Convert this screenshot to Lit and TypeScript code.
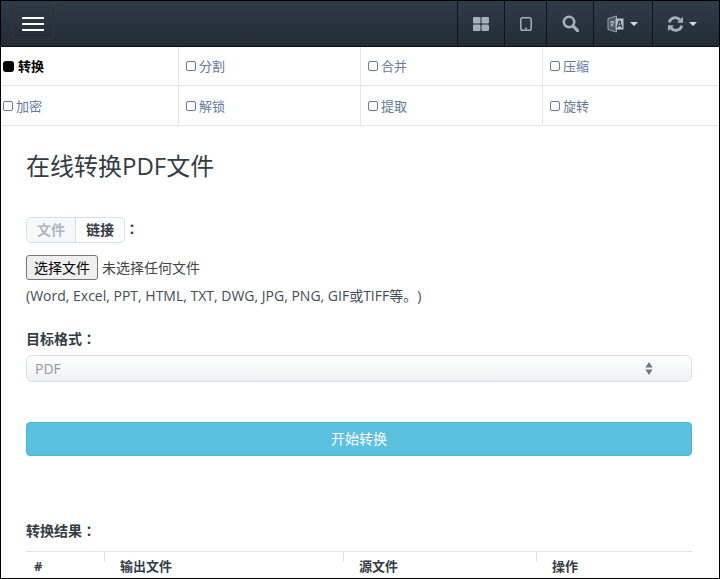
import { LitElement, html, css } from "lit";
import { customElement } from "lit/decorators.js";

const row1 = ["转换", "分割", "合并", "压缩"];
const row2 = ["加密", "解锁", "提取", "旋转"];

@customElement("app-root")
export class AppRoot extends LitElement {
  static styles = css`
    :host {
      display: block;
      width: 720px;
      height: 579px;
      box-sizing: border-box;
      border: 1px solid #000;
      overflow: hidden;
      background: #fff;
      font-family: "Open Sans", "Noto Sans CJK JP", sans-serif;
      font-size: 14px;
      line-height: 20px;
      color: #34495e;
      text-spacing-trim: space-all;
    }
    .nav {
      display: flex;
      background: linear-gradient(#2f3b47, #232c35);
      border-bottom: 1px solid #0b0f13;
      height: 45px;
    }
    .toggle {
      width: 42px;
      height: 33px;
      box-sizing: border-box;
      margin: 6px 0 0 11px;
      border: 1px solid #333;
      border-radius: 4px;
      display: flex;
      flex-direction: column;
      align-items: center;
      justify-content: center;
      gap: 4px;
    }
    .toggle i {
      display: block;
      width: 22px;
      height: 2px;
      background: #fff;
    }
    .spacer { flex: 1; }
    .ni {
      border-left: 1px solid #0f1419;
      display: flex;
      align-items: center;
      justify-content: center;
      gap: 6px;
      box-sizing: border-box;
      color: #a4afba;
    }
    .ni svg { display: block; }
    .ni.lang { padding-right: 2px; }
    .ni.sync { padding-right: 9px; gap: 5px; }
    .caret {
      width: 0;
      height: 0;
      border-left: 4px solid transparent;
      border-right: 4px solid transparent;
      border-top: 4px solid #d4d9de;
    }
    .tools {
      display: grid;
      grid-template-columns: 178px 182px 182px 1fr;
    }
    .cell {
      height: 39px;
      box-sizing: border-box;
      border-bottom: 1px solid #e7e7e7;
      border-right: 1px solid #e7e7e7;
      display: flex;
      align-items: center;
      padding-left: 7px;
      font-size: 13px;
      color: #66799c;
    }
    .cell:nth-child(4n) { border-right: 0; }
    .cell.first { padding-left: 2px; }
    .cell.r2 { height: 40px; }
    .cell.on { color: #000; font-weight: 700; }
    .box {
      width: 10px;
      height: 10px;
      box-sizing: border-box;
      border: 1px solid #66799c;
      border-radius: 2px;
      flex: none;
      margin-right: 3px;
    }
    .on .box {
      width: 11px;
      height: 11px;
      border: 0;
      background: #000;
      border-radius: 3px;
      margin-right: 4px;
    }
    .main { padding: 0 27px 0 25px; }
    h1 {
      margin: 24px 0 0;
      font-size: 24px;
      line-height: 32px;
      font-weight: 400;
      color: #333c45;
    }
    .tabs {
      display: flex;
      align-items: center;
      margin-top: 35px;
      font-weight: 700;
      font-size: 14px;
      color: #333c45;
    }
    .seg {
      display: flex;
      border: 1px solid #d5dfe9;
      border-radius: 5px;
      height: 26px;
      box-sizing: border-box;
    }
    .seg span {
      display: flex;
      align-items: center;
      justify-content: center;
      height: 23px;
    }
    .seg .act {
      width: 49px;
      height: 24px;
      padding-bottom: 1px;
      box-sizing: border-box;
      background: #f7f8fa;
      color: #aeb6c0;
      border-right: 1px solid #d5dfe9;
      border-radius: 4px 0 0 4px;
    }
    .seg .oth { width: 48px; }
    .colon { margin-top: -2px; }
    .file {
      display: flex;
      align-items: center;
      margin-top: 12px;
      font-size: 14px;
      color: #444;
    }
    button.pick {
      width: 72px;
      height: 25px;
      padding: 0 0 2px;
      margin-right: 4px;
      background: #efefef;
      border: 1px solid #767676;
      border-radius: 3px;
      font: 14px "Noto Sans CJK JP", sans-serif;
      color: #000;
    }
    .hint { margin-top: 6px; font-size: 14px; color: #444c55; }
    .lbl {
      font-weight: 700;
      font-size: 14px;
      color: #333c45;
    }
    .lbl.fmt { margin-top: 23px; }
    .sel {
      margin-top: 6px;
      height: 27px;
      box-sizing: border-box;
      border: 1px solid #d9dfe6;
      border-radius: 6px;
      background: linear-gradient(#fff, #f0f1f2);
      display: flex;
      align-items: center;
      justify-content: space-between;
      padding: 0 38px 0 8px;
      font-size: 14px;
      color: #8f979f;
    }
    .go {
      display: block;
      width: 100%;
      height: 34px;
      margin-top: 40px;
      padding: 0 0 2px;
      background: #5bc0de;
      border: 1px solid #46b8da;
      border-radius: 4px;
      color: #fff;
      font: 14px "Open Sans", "Noto Sans CJK JP", sans-serif;
    }
    .lbl.res { margin-top: 65px; }
    .thead {
      margin-top: 10px;
      display: grid;
      grid-template-columns: 78px 239px 193px 1fr;
      border-top: 1px solid #dee2e6;
      font-weight: 700;
      font-size: 13px;
      color: #333c45;
    }
    .th { position: relative; padding: 4px 0 0 8px; }
    .th + .th { padding-left: 16px; }
    .th + .th::before {
      content: "";
      position: absolute;
      left: 0;
      top: 0;
      height: 10px;
      width: 1px;
      background: #dee2e6;
    }
  `;

  private cell(t: string, cls: string) {
    return html`<div class="cell ${cls}"><span class="box"></span>${t}</div>`;
  }

  render() {
    return html`
      <div class="nav">
        <div class="toggle"><i></i><i></i><i></i></div>
        <div class="spacer"></div>
        <div class="ni" style="width:47px">
          <svg width="16" height="14" viewBox="0 0 16 14" fill="currentColor">
            <rect x="0" y="0" width="7.5" height="6.5" rx="1.2" />
            <rect x="8.5" y="0" width="7.5" height="6.5" rx="1.2" />
            <rect x="0" y="7.5" width="7.5" height="6.5" rx="1.2" />
            <rect x="8.5" y="7.5" width="7.5" height="6.5" rx="1.2" />
          </svg>
        </div>
        <div class="ni" style="width:42px">
          <svg width="12" height="14" viewBox="0 0 12 14" fill="none" stroke="currentColor" stroke-width="1.5">
            <rect x="0.8" y="0.8" width="10.4" height="12.4" rx="1.8" />
            <path d="M5 11.5h2" />
          </svg>
        </div>
        <div class="ni" style="width:47px">
          <svg width="17" height="17" viewBox="0 0 17 17" fill="none" stroke="currentColor">
            <circle cx="7" cy="7" r="5.2" stroke-width="2.6" />
            <path d="M11 11l4.6 4.6" stroke-width="3.2" stroke-linecap="round" />
          </svg>
        </div>
        <div class="ni lang" style="width:59px">
          <svg width="17" height="18" viewBox="0 0 17 18">
            <path d="M1 3.5 9.5 1v16L1 14.5z" fill="#4a5763" stroke="#98a4af" stroke-width="1" />
            <path d="M8.5 3.5h8v11h-8z" fill="#b9c3cc" />
            <path d="M3 7h4.4M5.2 6v1M6.4 7c-.4 2-1.6 3.4-3 4.2M4 8.6c.6 1.1 1.5 2 2.7 2.5" fill="none" stroke="#d4dae0" stroke-width=".9" />
            <path d="M10.2 12.6 12.1 6h.8l1.9 6.6M10.8 10.6h3.4" fill="none" stroke="#2a343e" stroke-width="1.2" />
          </svg>
          <span class="caret"></span>
        </div>
        <div class="ni sync" style="width:67px">
          <svg width="17" height="16" viewBox="0 0 17 16" fill="none" stroke="currentColor">
            <path d="M2.2 6.4A6.2 6.2 0 0 1 13 4" stroke-width="2.8" />
            <path d="M16 .8v6h-6z" fill="currentColor" stroke="none" />
            <path d="M14.8 9.6A6.2 6.2 0 0 1 4 12" stroke-width="2.8" />
            <path d="M1 15.2v-6h6z" fill="currentColor" stroke="none" />
          </svg>
          <span class="caret"></span>
        </div>
      </div>
      <div class="tools">
        ${row1.map((t, i) => this.cell(t, i === 0 ? "on first" : ""))}
        ${row2.map((t, i) => this.cell(t, i === 0 ? "r2 first" : "r2"))}
      </div>
      <div class="main">
        <h1>在线转换PDF文件</h1>
        <div class="tabs">
          <div class="seg"><span class="act">文件</span><span class="oth">链接</span></div>
          <span class="colon">：</span>
        </div>
        <div class="file"><button class="pick">选择文件</button>未选择任何文件</div>
        <div class="hint">(Word, Excel, PPT, HTML, TXT, DWG, JPG, PNG, GIF或TIFF等。)</div>
        <div class="lbl fmt">目标格式：</div>
        <div class="sel">
          <span>PDF</span>
          <svg width="8" height="13" viewBox="0 0 8 13" fill="#6c7580">
            <path d="M4 0l3.6 5.4H.4zM4 13 .4 7.6h7.2z" />
          </svg>
        </div>
        <button class="go">开始转换</button>
        <div class="lbl res">转换结果：</div>
        <div class="thead">
          <div class="th">#</div>
          <div class="th">输出文件</div>
          <div class="th">源文件</div>
          <div class="th">操作</div>
        </div>
      </div>
    `;
  }
}
